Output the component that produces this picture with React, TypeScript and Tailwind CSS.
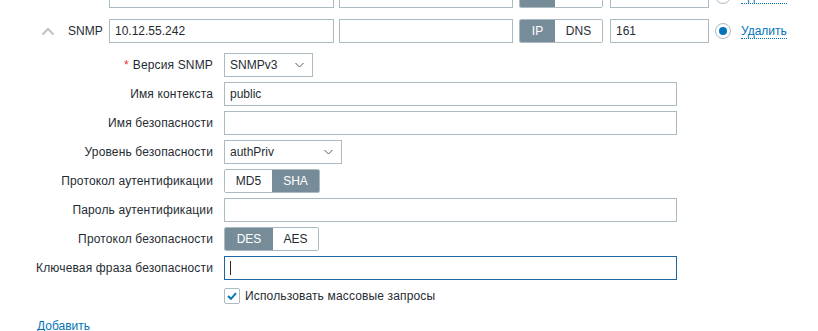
import { ReactNode } from 'react'

const font = { fontFamily: '"Liberation Sans", Arial, sans-serif' }

function Chevron({ faded }: { faded?: boolean }) {
  return (
    <svg width="14" height="9" viewBox="0 0 14 9" className={faded ? 'opacity-40' : ''}>
      <path d="M1.5 7.5 L7 2 L12.5 7.5" fill="none" stroke="#b8c4ca" strokeWidth="2" />
    </svg>
  )
}

function TextBox({ value, className }: { value?: string; className: string }) {
  return (
    <div
      className={`flex h-[24px] items-center border border-[#acbbc2] bg-white px-[5px] text-[12px] text-[#1f2c33] ${className}`}
    >
      {value}
    </div>
  )
}

function Select({ value, className }: { value: string; className: string }) {
  return (
    <div
      className={`flex h-[24px] items-center justify-between border border-[#acbbc2] bg-white pl-[5px] pr-[8px] text-[12px] text-[#1f2c33] ${className}`}
    >
      <span>{value}</span>
      <svg width="9" height="6" viewBox="0 0 9 6">
        <path d="M0.5 1 L4.5 5 L8.5 1" fill="none" stroke="#4f5b61" strokeWidth="1" />
      </svg>
    </div>
  )
}

function Segmented({ items, active, widths }: { items: string[]; active: number; widths: string[] }) {
  return (
    <div className="flex h-[24px] overflow-hidden rounded-[2px] border border-[#acbbc2] text-[12px]">
      {items.map((it, i) => (
        <div
          key={it}
          className={`flex items-center justify-center ${widths[i]} ${
            i === active ? 'bg-[#768d99] text-white' : 'bg-white text-[#1f2c33]'
          }`}
        >
          {it}
        </div>
      ))}
    </div>
  )
}

function InterfaceRow({ ip, faded }: { ip: string; faded?: boolean }) {
  return (
    <div className="flex h-[24px] items-center">
      <div className="flex w-[68px] justify-end pr-[13px]">
        <Chevron faded={faded} />
      </div>
      <span className="w-[41px] text-[12px] text-[#1f2c33]">SNMP</span>
      <TextBox value={ip} className="w-[225px]" />
      <TextBox className="ml-[5px] w-[174px]" />
      <div className="ml-[6px]">
        <Segmented items={['IP', 'DNS']} active={0} widths={['w-[35px]', 'w-[47px]']} />
      </div>
      <TextBox value="161" className="ml-[7px] w-[99px]" />
      <div className="ml-[6px] flex h-[16px] w-[16px] items-center justify-center rounded-full border border-[#acbbc2] bg-white">
        <div className="h-[8px] w-[8px] rounded-full bg-[#0275b8]" />
      </div>
      <span className="ml-[10px] border-b border-dotted border-[#0275b8] text-[12px] leading-[14px] text-[#0275b8]">
        Удалить
      </span>
    </div>
  )
}

function Row({ label, required, children }: { label: string; required?: boolean; children: ReactNode }) {
  return (
    <>
      <div className="flex h-[24px] items-center justify-end text-[12px] tracking-[0.15px] text-[#1f2c33]">
        {required ? <span className="mr-[4px] text-[#e33734]">*</span> : null}
        {label}
      </div>
      <div className="flex h-[24px] items-center">{children}</div>
    </>
  )
}

export default function App() {
  return (
    <div className="h-[331px] w-[818px] overflow-hidden bg-white" style={font}>
      <div className="-mt-[16px] flex flex-col gap-[11px]">
        <InterfaceRow ip="10.12.55.242" faded />
        <InterfaceRow ip="10.12.55.242" />
      </div>

      <div className="mt-[10px] grid grid-cols-[213px_453px] gap-x-[11px] gap-y-[5px]">
        <Row label="Версия SNMP" required>
          <Select value="SNMPv3" className="w-[89px]" />
        </Row>
        <Row label="Имя контекста">
          <TextBox value="public" className="w-[453px]" />
        </Row>
        <Row label="Имя безопасности">
          <TextBox className="w-[453px]" />
        </Row>
        <Row label="Уровень безопасности">
          <Select value="authPriv" className="w-[118px]" />
        </Row>
        <Row label="Протокол аутентификации">
          <Segmented items={['MD5', 'SHA']} active={1} widths={['w-[47px]', 'w-[47px]']} />
        </Row>
        <Row label="Пароль аутентификации">
          <TextBox className="w-[453px]" />
        </Row>
        <Row label="Протокол безопасности">
          <Segmented items={['DES', 'AES']} active={0} widths={['w-[48px]', 'w-[45px]']} />
        </Row>
        <Row label="Ключевая фраза безопасности">
          <div className="flex h-[24px] w-[453px] items-center border border-[#1f65a0] bg-white px-[5px]">
            <div className="h-[14px] w-px bg-[#1f2c33]" />
          </div>
        </Row>
        <div />
        <div className="mt-[3px] flex h-[16px] items-center gap-[5px] text-[12px] tracking-[0.15px] text-[#1f2c33]">
          <div className="flex h-[16px] w-[16px] items-center justify-center rounded-[2px] border border-[#acbbc2] bg-white">
            <svg width="10" height="8" viewBox="0 0 10 8">
              <path d="M1 4 L4 6.8 L9 1.2" fill="none" stroke="#0275b8" strokeWidth="2" />
            </svg>
          </div>
          Использовать массовые запросы
        </div>
      </div>

      <div className="ml-[37px] mt-[13px] text-[12px] text-[#0275b8]">Добавить</div>
    </div>
  )
}
